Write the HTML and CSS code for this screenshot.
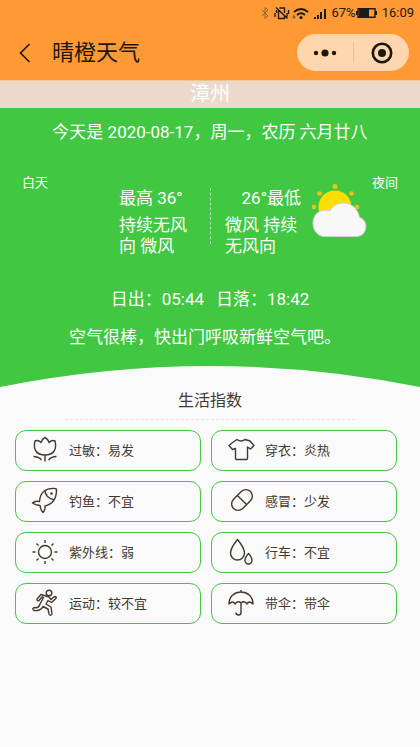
FILE: index.html
```html
<!DOCTYPE html>
<html lang="zh-CN">
<head>
<meta charset="utf-8">
<meta name="viewport" content="width=device-width, initial-scale=1">
<title>晴橙天气</title>
<link rel="stylesheet" href="styles.css">
</head>
<body>
<header class="top">
  <div class="status">
    <svg class="status-icons" width="68" height="16" viewBox="0 0 68 16" aria-hidden="true">
      <path d="M2 5l6 6-3 2.500v-11L8 5l-6 6" fill="none" stroke="#8b6a45"/>
      <g fill="none" stroke="#1c1812" stroke-width="1.300">
        <path d="M18.500 5v8.500h6V10M19.500 3h5v5M16.500 5v3M15 8v4M27 8v4M28.500 5v4M16 2.500l11.500 11"/>
        <path d="M34 7q7-6 14 0M37 10q4-3.500 8 0" stroke-width="1.800"/>
      </g>
      <circle cx="41" cy="12.500" r="1.600" fill="#1c1812"/>
      <path d="M34 10v4M32.500 12h3" stroke="#6d5130" fill="none"/>
      <path d="M54 12h2v2h-2zM57 10h2v4h-2zM60 7h2v7h-2zM64 4h2v10h-2z" fill="#1c1812"/>
    </svg>
    <span>67%</span>
    <svg width="22" height="12" viewBox="0 0 22 12" aria-hidden="true">
      <path d="M2 1.700h17v8.600H2z" fill="none" stroke="#1c1812" stroke-width="1.400"/>
      <path d="M0 4h2v4H0zM3 2h10v8H3zM19 4h2v4h-2z" fill="#1c1812"/>
    </svg>
    <span class="clock">16:09</span>
  </div>
  <div class="nav">
    <button class="back" aria-label="返回">
      <svg width="12" height="20" viewBox="0 0 12 20"><path d="M10.500 1L1.500 10l9 9" fill="none" stroke="#1c1812" stroke-width="1.600"/></svg>
    </button>
    <h1>晴橙天气</h1>
    <div class="capsule">
      <button aria-label="更多">
        <svg width="24" height="8" viewBox="0 0 24 8" fill="#1c1812"><circle cx="3" cy="4" r="2.200"/><circle cx="12" cy="4" r="3.600"/><circle cx="21" cy="4" r="2.200"/></svg>
      </button>
      <button aria-label="关闭">
        <svg width="22" height="22" viewBox="0 0 22 22"><circle cx="11" cy="11" r="9.200" fill="none" stroke="#1c1812" stroke-width="2.600"/><circle cx="11" cy="11" r="4" fill="#1c1812"/></svg>
      </button>
    </div>
  </div>
</header>
<main>
  <h2 class="city">漳州</h2>
  <section class="weather">
    <p class="date">今天是 2020-08-17，周一，农历 六月廿八</p>
    <div class="forecast">
      <span class="period">白天</span>
      <div class="day">
        <p class="temp">最高 36°</p>
        <p>持续无风向 微风</p>
      </div>
      <div class="night">
        <p class="temp">26°最低</p>
        <p>微风 持续无风向</p>
      </div>
      <svg class="cloud" viewBox="0 0 57 56" role="img" aria-label="多云">
        <g fill="#ffde00">
          <circle cx="24" cy="24" r="16.500"/>
          <g fill="#f5bf17"><circle cx="24" cy="3.500" r="2.500"/><circle cx="8.500" cy="10.500" r="2.300"/><circle cx="40.500" cy="10.500" r="2.300"/><circle cx="3" cy="24" r="2.300"/><circle cx="46" cy="24" r="2.300"/></g>
        </g>
        <path d="M14 53.500C-2 53.500-2 27 14 27.500Q17 27 19 28C25 16 45 17 48.500 34.500C58 37 57 53.500 45 53.500Z" fill="#f8f8f8" stroke="#d8cfdc"/>
      </svg>
      <span class="period">夜间</span>
    </div>
    <p class="sun"><span>日出：05:44</span><span>日落：18:42</span></p>
    <p class="air">空气很棒，快出门呼吸新鲜空气吧。</p>
    <svg class="curve" viewBox="0 0 420 24" preserveAspectRatio="none" aria-hidden="true"><path d="M0 22Q210-20 420 22V24H0Z" fill="#fafafa"/></svg>
  </section>
  <section class="life">
    <h2>生活指数</h2>
    <ul>
      <li><svg viewBox="0 0 28 28"><path d="M4 5Q7 3.500 10 6.500Q11 3 14 1.500Q17 3 18 6.500Q21 3.500 24 5C26 13 23 19 14 19S2 13 4 5ZM14 19.500v6M2.500 20.500q5 0 8 3.500M25.500 20.500q-5 0-8 3.500"/></svg>过敏：易发</li>
      <li><svg viewBox="0 0 28 28"><path d="M5 7L10 3.500Q14 6.500 18 3.500L23 5L27 9.500L23.500 13L20.500 11V22.500Q20.500 23.500 19.500 23.500H9.500Q8.500 23.500 8.500 22.500V12.500L5.500 13.500L2 9.500Z"/></svg>穿衣：炎热</li>
      <li><svg viewBox="0 0 28 28"><path d="M8.500 14.500C9 5 15 .8 24 1.500Q25.500 1.500 25.500 3C25.500 11 22 17 14 19Q14.500 23 12 25.500Q10 24 9 18.500Q4 18 1.500 16Q4 13.500 8.500 14.500ZM14 3.500Q14 10.500 23.500 13"/><circle cx="20.500" cy="6.500" r=".6"/></svg>钓鱼：不宜</li>
      <li><svg viewBox="0 0 28 28"><g transform="rotate(-45 15 13)"><rect x="3" y="6.500" width="24" height="13" rx="6.500"/><path d="M15 6.500v13"/></g></svg>感冒：少发</li>
      <li><svg viewBox="0 0 28 28"><circle cx="14" cy="14" r="6.500"/><path d="M14 2v3M14 23v3M1.500 14h3M23.500 14h3M5.500 5.500l2 2M20.500 20.500l2 2M22.500 5.500l-2 2M7.500 20.500l-2 2"/></svg>紫外线：弱</li>
      <li><svg viewBox="0 0 28 28"><path d="M10.500 1.500C6 7 3.500 11 3.500 15a7 7 0 0 0 14 0C17.500 11 15 7 10.500 1.500ZM21.500 15.500Q18 19.500 18 22.500a3.500 3.500 0 0 0 7 0Q25 19.500 21.500 15.500Z"/></svg>行车：不宜</li>
      <li><svg viewBox="0 0 28 28"><circle cx="18" cy="4" r="2.800"/><path d="M6 10L10 5.500L18 8L20 10.500L23.500 7.500Q26 7.500 25 9.500L20.500 13.500L17 11.500L15 15L20 18L21 25Q19.500 27.500 18 25L17 20L12 17.500C11 21 6 22 3 21.500Q.5 20 3 18.500Q8 19.500 9 15L12.500 8.500L11 8L8 11.500Q6 12.500 6 10Z"/></svg>运动：较不宜</li>
      <li><svg viewBox="0 0 28 28"><path d="M14 1v2M2 15C2 -1 26 -1 26 15Q22 11 20 15Q17 11 14 14Q11 11 8 15Q6 11 2 15ZM14 14v9.500Q14 26 11.500 26Q9 26 9 23.500"/></svg>带伞：带伞</li>
    </ul>
  </section>
</main>
</body>
</html>
```
FILE: styles.css
```css
* {
  box-sizing: border-box;
}

body,
h1,
h2,
p,
ul {
  margin: 0;
  padding: 0;
}

body {
  min-height: 100vh;
  background: #fafafa;
  color: #44392f;
  font-family: Roboto, "Noto Sans CJK SC", sans-serif;
}

svg {
  display: block;
  flex: none;
}

button {
  display: flex;
  align-items: center;
  justify-content: center;
  padding: 0;
  border: 0;
  background: none;
}

.top {
  background: #ff9933;
  color: #1c1812;
}

.status {
  display: flex;
  align-items: center;
  justify-content: flex-end;
  height: 25px;
  padding-right: 6px;
  font-size: 13px;
}

.status-icons {
  margin-right: 3px;
}

.clock {
  margin-left: 4px;
}

.nav {
  display: flex;
  align-items: center;
  height: 55px;
  padding: 0 11px 0 19px;
}

.back {
  margin-right: 21px;
}

h1 {
  flex: 1;
  font-size: 22px;
  font-weight: 400;
  line-height: 32px;
}

.capsule {
  display: grid;
  grid-template-columns: 1fr 1fr;
  width: 112px;
  height: 37px;
  border-radius: 19px;
  background: #ffd6ad;
}

.capsule button + button {
  height: 21px;
  align-self: center;
  border-left: 1px solid #dfc29f;
}

.city {
  border-top: 1px solid #f3c58e;
  background: #ebdacb;
  color: #fff;
  font-size: 20px;
  font-weight: 400;
  line-height: 27px;
  text-align: center;
}

.weather {
  padding-top: 12px;
  background: #41c741;
  color: #fff;
  font-size: 17px;
  line-height: 24px;
}

.date,
.air {
  text-align: center;
}

.forecast {
  display: grid;
  grid-template-columns: 97fr 91fr 101fr 57fr 30fr;
  padding: 30px 22px 0;
}

.period {
  font-size: 13px;
  line-height: 18px;
}

.period:last-child {
  text-align: right;
}

.day,
.night {
  margin-top: 14px;
  line-height: 21px;
}

.day {
  padding-right: 16px;
}

.night {
  height: 56px;
  margin-bottom: 12px;
  padding: 0 10px 0 14px;
  border-left: 1px dashed #b5e8b5;
}

.temp {
  margin-bottom: 6px;
}

.night .temp {
  text-align: right;
}

.cloud {
  width: 100%;
  margin-top: 9px;
}

.sun {
  display: flex;
  justify-content: center;
  gap: 12px;
  margin-top: 30px;
}

.air {
  margin-top: 14px;
  padding-right: 10px;
}

.curve {
  width: 100%;
  height: 24px;
  margin-top: 16px;
}

.life h2 {
  margin: 0 65px 10px;
  padding-bottom: 6px;
  border-bottom: 1px dashed #e4e4e4;
  font-size: 16px;
  font-weight: 400;
  line-height: 24px;
  text-align: center;
}

.life ul {
  display: grid;
  grid-template-columns: 1fr 1fr;
  gap: 10px;
  padding: 0 23px 20px 15px;
  list-style: none;
}

.life li {
  display: flex;
  align-items: center;
  gap: 10px;
  height: 41px;
  padding: 0 0 2px 15px;
  border: 1px solid #41c741;
  border-radius: 11px;
  font-size: 13px;
}

.life li svg {
  width: 28px;
  height: 28px;
  fill: none;
  stroke: #44392f;
  stroke-width: 1.4;
  stroke-linejoin: round;
}
```
